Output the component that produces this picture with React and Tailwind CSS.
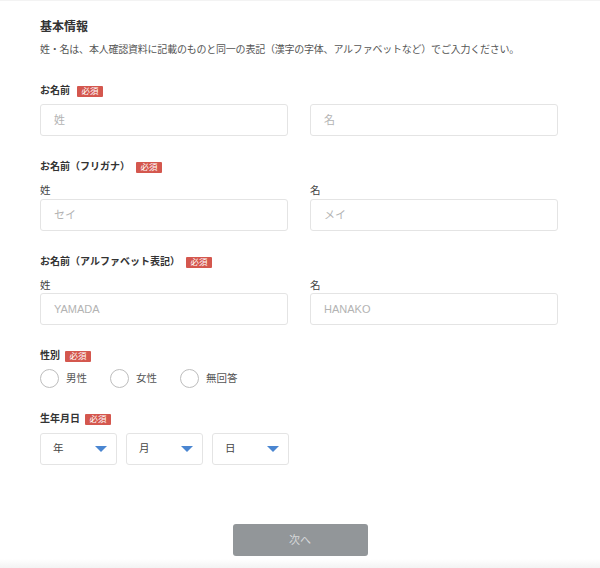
import React from "react";

const font = { fontFamily: '"Liberation Sans", "Noto Sans CJK JP", "Noto Sans", sans-serif' };

function Badge() {
  return (
    <span className="inline-flex items-center justify-center h-[11px] w-[26px] rounded-[1px] bg-[#d4574e] text-white text-[8.5px] leading-none">
      必須
    </span>
  );
}

function Label({ children, gap = "gap-[7px]" }) {
  return (
    <div className={`flex items-center ${gap} h-[16px]`}>
      <span className="text-[10px] font-bold text-[#333] leading-[16px]">{children}</span>
      <Badge />
    </div>
  );
}

function Input({ placeholder }) {
  return (
    <div className="h-[32px] rounded-[3px] border border-[#e4e4e4] bg-white flex items-center px-[13px]">
      <span className="text-[11px] text-[#b3b3b3]">{placeholder}</span>
    </div>
  );
}

function SubLabel({ children }) {
  return <div className="mt-[7px] h-[16px] text-[10.5px] leading-[16px] text-[#444]">{children}</div>;
}

function Radio({ label }) {
  return (
    <div className="flex items-center gap-[7px]">
      <span className="w-[19px] h-[19px] rounded-full border border-[#bdbdbd] bg-white" />
      <span className="text-[10.5px] text-[#555]">{label}</span>
    </div>
  );
}

function Select({ label }) {
  return (
    <div className="w-[77px] h-[32px] rounded-[3px] border border-[#e4e4e4] bg-white flex items-center justify-between pl-[12px] pr-[9px]">
      <span className="text-[10.5px] text-[#444]">{label}</span>
      <svg width="12" height="6" viewBox="0 0 12 6">
        <path d="M0 0 L12 0 L6 6 Z" fill="#4a86d1" />
      </svg>
    </div>
  );
}

export default function App() {
  return (
    <div style={font} className="w-[600px] h-[568px] overflow-hidden bg-white border-t border-[#f3f3f3] flex flex-col relative">
      <div className="px-[40px] pt-[18px]">
        <div className="text-[12px] leading-[16px] font-bold text-[#333]">基本情報</div>
        <div className="mt-[8px] text-[10px] leading-[14px] text-[#555] tracking-[-0.22px] whitespace-nowrap">
          姓・名は、本人確認資料に記載のものと同一の表記（漢字の字体、アルファベットなど）でご入力ください。
        </div>

        <div className="mt-[26px]">
          <Label>お名前</Label>
          <div className="mt-[5px] grid grid-cols-2 gap-[22px] w-[518px]">
            <Input placeholder="姓" />
            <Input placeholder="名" />
          </div>
        </div>

        <div className="mt-[23px]">
          <Label gap="gap-[6px]">お名前（フリガナ）</Label>
          <div className="grid grid-cols-2 gap-x-[22px] w-[518px]">
            <div>
              <SubLabel>姓</SubLabel>
              <div className="mt-[1px]"><Input placeholder="セイ" /></div>
            </div>
            <div>
              <SubLabel>名</SubLabel>
              <div className="mt-[1px]"><Input placeholder="メイ" /></div>
            </div>
          </div>
        </div>

        <div className="mt-[23px]">
          <Label gap="gap-[6px]">お名前（アルファベット表記）</Label>
          <div className="grid grid-cols-2 gap-x-[22px] w-[518px]">
            <div>
              <SubLabel>姓</SubLabel>
              <div><Input placeholder="YAMADA" /></div>
            </div>
            <div>
              <SubLabel>名</SubLabel>
              <div><Input placeholder="HANAKO" /></div>
            </div>
          </div>
        </div>

        <div className="mt-[23px]">
          <Label gap="gap-[5px]">性別</Label>
          <div className="mt-[5px] flex items-center gap-[23px]">
            <Radio label="男性" />
            <Radio label="女性" />
            <Radio label="無回答" />
          </div>
        </div>

        <div className="mt-[23px]">
          <Label gap="gap-[5px]">生年月日</Label>
          <div className="mt-[6px] flex gap-[9px]">
            <Select label="年" />
            <Select label="月" />
            <Select label="日" />
          </div>
        </div>
      </div>

      <div className="mt-[59px] flex justify-center">
        <div className="w-[135px] h-[32px] rounded-[3px] bg-[#929699] flex items-center justify-center text-[11px] text-[#d6d8da]">
          次へ
        </div>
      </div>

      <div className="absolute left-0 right-0 bottom-0 h-[9px] bg-gradient-to-b from-white to-[#f3f3f3]" />
    </div>
  );
}
